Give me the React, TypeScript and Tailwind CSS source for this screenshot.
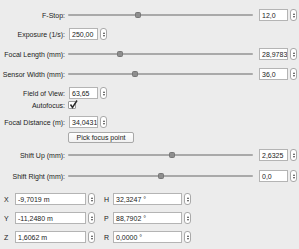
import React from 'react';

const Stepper = () => (
  <div className="w-[7px] h-[12px] rounded-[3px] border border-[#a9a9a9] bg-white flex flex-col items-center justify-center gap-[1px]">
    <div className="w-0 h-0 border-l-[1.5px] border-r-[1.5px] border-b-[2px] border-l-transparent border-r-transparent border-b-[#444]" />
    <div className="w-0 h-0 border-l-[1.5px] border-r-[1.5px] border-t-[2px] border-l-transparent border-r-transparent border-t-[#444]" />
  </div>
);

const Field = ({ value, w = 'w-[29px]' }: { value: string; w?: string }) => (
  <div className="flex items-center gap-[2px]">
    <div className={`${w} h-[12px] border border-[#b4b4b4] bg-white pl-[2px] flex items-center text-[7px] text-[#222] leading-none whitespace-nowrap overflow-hidden`}>
      {value}
    </div>
    <Stepper />
  </div>
);

const Label = ({ children }: { children: React.ReactNode }) => (
  <div className="w-[66px] shrink-0 text-right pr-[1px] text-[7px] text-[#222] leading-none whitespace-nowrap">
    {children}
  </div>
);

const Slider = ({ pos }: { pos: number }) => (
  <div className="relative w-[185px] h-[12px] flex items-center">
    <div className="w-full h-[2px] bg-[#a9a9a9] rounded-full" />
    <div
      className="absolute w-[6px] h-[6px] rounded-[1.5px] bg-[#8e8e8e] border border-[#777]"
      style={{ left: `calc(${pos}% - 3px)` }}
    />
  </div>
);

const SliderRow = ({ label, pos, value, className }: { label: string; pos: number; value: string; className: string }) => (
  <div className={`flex items-center h-[12px] ${className}`}>
    <Label>{label}</Label>
    <div className="ml-[2px]">
      <Slider pos={pos} />
    </div>
    <div className="ml-[6px]">
      <Field value={value} />
    </div>
  </div>
);

const FieldRow = ({ label, value, className }: { label: string; value: string; className: string }) => (
  <div className={`flex items-center h-[12px] ${className}`}>
    <Label>{label}</Label>
    <div className="ml-[3px]">
      <Field value={value} />
    </div>
  </div>
);

const Coord = ({ axis, value, w, lw }: { axis: string; value: string; w: string; lw: string }) => (
  <div className="flex items-center">
    <div className={`${lw} text-[7px] text-[#222] leading-none`}>{axis}</div>
    <Field value={value} w={w} />
  </div>
);

export default function App() {
  return (
    <div
      className="w-[299px] h-[249px] bg-[#ececec] overflow-hidden flex flex-col pt-[9px]"
      style={{ fontFamily: '"Liberation Sans", Arial, sans-serif' }}
    >
      <SliderRow label="F-Stop:" pos={38} value="12,0" className="" />
      <FieldRow label="Exposure (1/s):" value="250,00" className="mt-[7px]" />
      <SliderRow label="Focal Length (mm):" pos={28} value="28,9783" className="mt-[8px]" />
      <SliderRow label="Sensor Width (mm):" pos={36} value="36,0" className="mt-[8px]" />
      <FieldRow label="Field of View:" value="63,65" className="mt-[7px]" />
      <div className="flex items-center h-[10px] mt-[1px]">
        <Label>Autofocus:</Label>
        <div className="ml-[2px] relative w-[8px] h-[8px] border border-[#9a9a9a] bg-white rounded-[1px]">
          <svg className="absolute -top-[2px] left-0" width="9" height="9" viewBox="0 0 9 9">
            <path d="M1.5 4.5 L3.5 7.5 L8 0.5" fill="none" stroke="#2a2a2a" strokeWidth="1.5" />
          </svg>
        </div>
      </div>
      <FieldRow label="Focal Distance (m):" value="34,0431" className="mt-[6px]" />
      <div className="flex items-center h-[11px] mt-[4px]">
        <div className="w-[68px] shrink-0" />
        <div className="w-[66px] h-[11px] rounded-[2px] border border-[#a8a8a8] bg-gradient-to-b from-white to-[#f1f1f1] flex items-center justify-center text-[7px] text-[#222] leading-none">
          Pick focus point
        </div>
      </div>
      <SliderRow label="Shift Up (mm):" pos={56} value="2,6325" className="mt-[6px]" />
      <SliderRow label="Shift Right (mm):" pos={50} value="0,0" className="mt-[9px]" />
      <div className="grid grid-cols-[auto_auto] justify-start gap-x-[9px] gap-y-[7px] pl-[4px] mt-[11px]">
        <Coord axis="X" value="-9,7019 m" w="w-[71px]" lw="w-[11px]" />
        <Coord axis="H" value="32,3247 °" w="w-[69px]" lw="w-[9px]" />
        <Coord axis="Y" value="-11,2480 m" w="w-[71px]" lw="w-[11px]" />
        <Coord axis="P" value="88,7902 °" w="w-[69px]" lw="w-[9px]" />
        <Coord axis="Z" value="1,6062 m" w="w-[71px]" lw="w-[11px]" />
        <Coord axis="R" value="0,0000 °" w="w-[69px]" lw="w-[9px]" />
      </div>
    </div>
  );
}
